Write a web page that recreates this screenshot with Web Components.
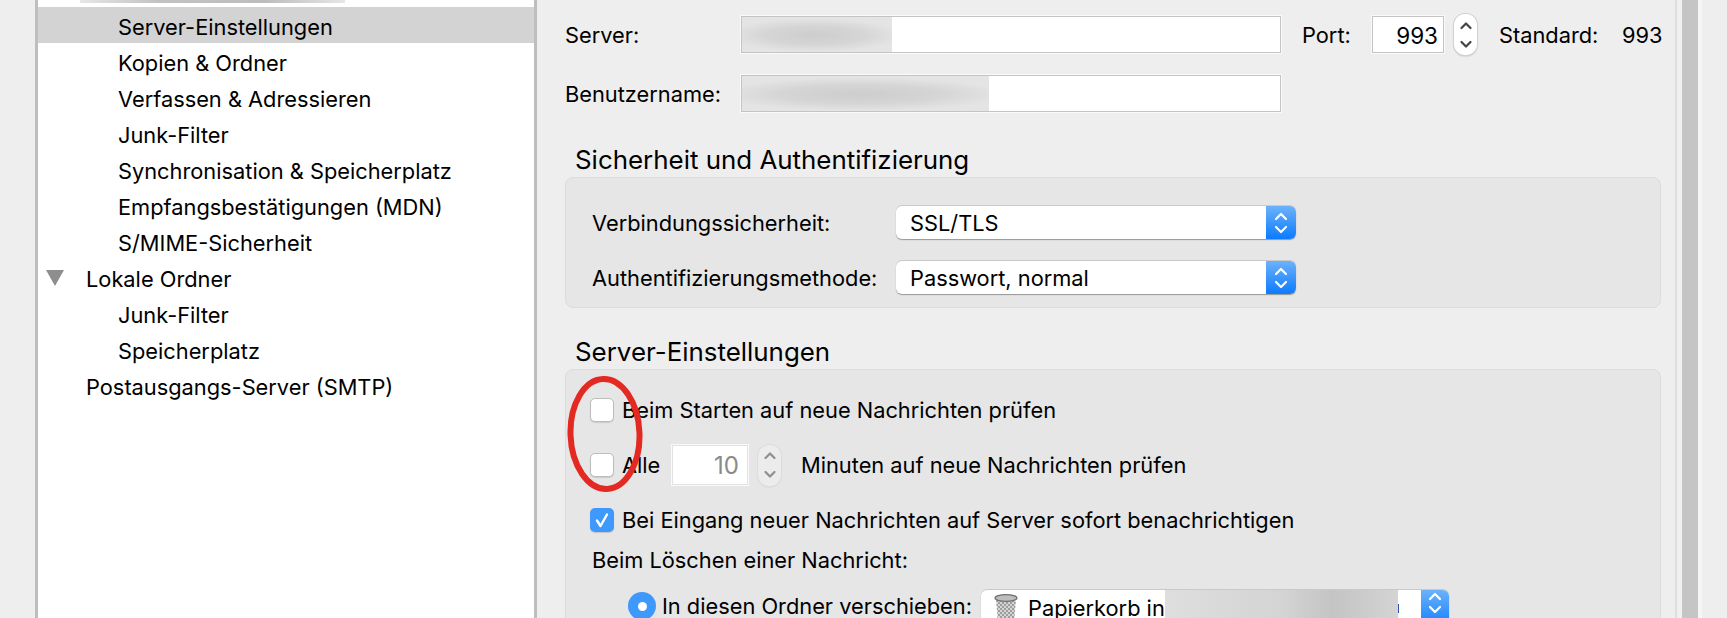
<!DOCTYPE html>
<html lang="de"><head><meta charset="utf-8"><title>Server-Einstellungen</title>
<style>
html,body{margin:0;padding:0;height:618px;overflow:hidden;background:#eee}
body{font:21.8px/24px Inter,"Liberation Sans",Arial,sans-serif;color:#000}
</style></head><body>
<pref-window>
  <account-tree slot="tree">
    <tree-row indent="2" selected>Server-Einstellungen</tree-row>
    <tree-row indent="2">Kopien &amp; Ordner</tree-row>
    <tree-row indent="2">Verfassen &amp; Adressieren</tree-row>
    <tree-row indent="2">Junk-Filter</tree-row>
    <tree-row indent="2">Synchronisation &amp; Speicherplatz</tree-row>
    <tree-row indent="2">Empfangsbestätigungen (MDN)</tree-row>
    <tree-row indent="2">S/MIME-Sicherheit</tree-row>
    <tree-row indent="1" open>Lokale Ordner</tree-row>
    <tree-row indent="2">Junk-Filter</tree-row>
    <tree-row indent="2">Speicherplatz</tree-row>
    <tree-row indent="1">Postausgangs-Server (SMTP)</tree-row>
  </account-tree>
  <settings-form slot="form">
    <form-row style="--top:16px;--h:37px">
      <form-label style="--w:176px">Server:</form-label>
      <text-field style="--w:540px;--h:37px" blur="150"></text-field>
      <form-label style="--w:70px;--ml:21px">Port:</form-label>
      <text-field style="--w:72px;--h:37px" align="right">993</text-field>
      <mac-stepper style="--ml:10px"></mac-stepper>
      <form-label style="--w:123px;--ml:22px">Standard:</form-label>
      <span>993</span>
    </form-row>
    <form-row style="--top:22px;--h:37px">
      <form-label style="--w:176px">Benutzername:</form-label>
      <text-field style="--w:540px;--h:37px" blur="247"></text-field>
    </form-row>
    <group-box heading="Sicherheit und Authentifizierung" style="--title-top:34px;--pad:28px 0 14px 26px;--box-h:131px">
      <form-row style="--h:33px">
        <form-label style="--w:304px">Verbindungssicherheit:</form-label>
        <mac-select style="--w:400px">SSL/TLS</mac-select>
      </form-row>
      <form-row style="--top:22px;--h:33px">
        <form-label style="--w:304px">Authentifizierungsmethode:</form-label>
        <mac-select style="--w:400px">Passwort, normal</mac-select>
      </form-row>
    </group-box>
    <group-box heading="Server-Einstellungen" style="--title-top:30px;--pad:28px 0 0 24px;--box-h:260px">
      <form-row style="--h:23px">
        <mac-check>Beim Starten auf neue Nachrichten prüfen</mac-check>
      </form-row>
      <form-row style="--top:24px;--h:40px">
        <mac-check style="--w:82px">Alle</mac-check>
        <text-field style="--w:76px;--h:40px" align="right" disabled>10</text-field>
        <mac-stepper disabled style="--ml:10px"></mac-stepper>
        <span style="margin-left:20px">Minuten auf neue Nachrichten prüfen</span>
      </form-row>
      <form-row style="--top:23px;--h:23px">
        <mac-check checked>Bei Eingang neuer Nachrichten auf Server sofort benachrichtigen</mac-check>
      </form-row>
      <form-row style="--top:17px;--h:24px;--ml:2px">
        <span>Beim Löschen einer Nachricht:</span>
      </form-row>
      <form-row style="--top:18px;--h:32px;--ml:38px">
        <mac-radio style="--w:353px">In diesen Ordner verschieben:</mac-radio>
        <mac-select style="--w:468px;--ml:0px" folder>Papierkorb in</mac-select>
      </form-row>
    </group-box>
    <red-ellipse></red-ellipse>
  </settings-form>
</pref-window>
<script>
const def=(name,html)=>{
  customElements.define(name,class extends HTMLElement{
    constructor(){super();this.attachShadow({mode:'open'});}
    connectedCallback(){this.shadowRoot.innerHTML=typeof html==='function'?html(this):html;}
  });
};
const chev=(c,w)=>`<svg width="14" height="26" viewBox="0 0 14 26" fill="none" stroke="${c}" stroke-width="${w}" stroke-linecap="round" stroke-linejoin="round"><path d="M2 9 7 4l5 5M2 17l5 5 5-5"/></svg>`;

def('pref-window',`<style>
:host{display:flex;width:1727px;height:618px;overflow:hidden;background:#eee}
.l{flex:0 0 35px}
.t{flex:0 0 502px;height:618px;box-sizing:border-box;border-left:3px solid #bebebe;border-right:3px solid #bebebe;background:#fff;overflow:hidden}
.f{flex:0 0 1138px;height:618px;position:relative}
.sep{flex:0 0 2px;background:#dedede}
.g{flex:0 0 5px;background:#f0f0f0}
.sb{flex:0 0 16px;background:#c5c5c5}
.w{flex:0 0 4px;background:#f6f6f6}
.r{flex:1;background:#eeeeee}
</style><div class="l"></div><div class="t"><slot name="tree"></slot></div><div class="f"><slot name="form"></slot></div><div class="sep"></div><div class="g"></div><div class="sb"></div><div class="w"></div><div class="r"></div>`);

def('account-tree',`<style>
:host{display:block}
.clip{height:7px}
.strip{margin-left:42px;width:265px;height:3px;background:linear-gradient(90deg,#e6e6e6,#c2c2c2 30%,#bdbdbd 70%,#e6e6e6)}
</style><div class="clip"><div class="strip"></div></div><slot></slot>`);

def('tree-row',h=>{
  const pl=h.getAttribute('indent')==='2'?80:48;
  const tri=h.hasAttribute('open')?`<svg class="tri" width="18" height="16" viewBox="0 0 18 16"><path d="M0 0H18L9 16Z" fill="#8e8e8e"/></svg>`:'';
  return `<style>
  :host{display:block;height:36px;${h.hasAttribute('selected')?'background:#d3d3d3;':''}}
  .r{height:36px;box-sizing:border-box;padding:2px 0 0 ${pl}px;line-height:36px;display:block;position:relative;white-space:nowrap}
  .tri{position:absolute;left:8px;top:11px}
  </style><div class="r">${tri}<slot></slot></div>`;
});

def('settings-form',`<style>
:host{display:block;box-sizing:border-box;padding-left:28px;height:618px;overflow:hidden;position:relative}
</style><slot></slot>`);

def('form-row',`<style>
:host{display:flex;align-items:center;height:var(--h);margin-top:var(--top,0);margin-left:var(--ml,0);white-space:nowrap}
</style><slot></slot>`);

def('form-label',`<style>
:host{display:block;width:var(--w);margin-left:var(--ml,0);white-space:nowrap}
</style><slot></slot>`);

def('text-field',h=>{
  const b=h.getAttribute('blur');
  const dis=h.hasAttribute('disabled');
  return `<style>
  :host{display:block;width:var(--w);height:var(--h);margin-left:var(--ml,0);box-sizing:border-box;border:1px solid #c4c4c4;outline:1px solid #fafafa;background:#fff;overflow:hidden;flex:none;${dis?'color:#8a8a8a;border-color:#e2e2e2;':''}}
  .v{display:block;text-align:right;padding-right:${dis?8:5}px;font-size:${dis?24:22.5}px;line-height:${dis?40:38}px}
  .b{height:100%;background:radial-gradient(ellipse 58% 48% at 48% 52%,#cdcdcd 0,#d5d5d5 55%,#e4e4e4 100%)}
  </style>${b?`<div class="b" style="width:${b}px"></div>`:`<span class="v"><slot></slot></span>`}`;
});

def('mac-stepper',h=>{
  const dis=h.hasAttribute('disabled');
  return `<style>
  :host{display:flex;align-items:center;justify-content:center;flex:none;width:23px;height:41px;margin-left:var(--ml,0);border-radius:11px;background:${dis?'#ececec':'#fff'};box-shadow:0 0 0 1px ${dis?'#dcdcdc':'#d2d2d2'},0 1px 2px rgba(0,0,0,${dis?.1:.3})}
  svg{display:block}
  </style><svg width="14" height="32" viewBox="0 0 14 32" fill="none" stroke="${dis?'#8f8f8f':'#444'}" stroke-width="2.2" stroke-linecap="round" stroke-linejoin="round"><path d="M2.5 9 7 4.5 11.5 9M2.5 23 7 27.5l4.5-4.5"/></svg>`;
});

def('group-box',h=>`<style>
:host{display:block;width:1096px}
.t{margin-top:var(--title-top);margin-left:10px;font-size:25.9px;line-height:28px;white-space:nowrap}
.b{height:var(--box-h);box-sizing:border-box;margin-top:3px;padding:var(--pad);background:#e6e6e6;border:1px solid #dcdcdc;border-radius:8px}
</style><div class="t">${h.getAttribute('heading')}</div><div class="b"><slot></slot></div>`);

def('mac-select',h=>{
  const folder=h.hasAttribute('folder');
  const trash=`<svg width="26" height="32" viewBox="0 0 26 32" style="flex:none;margin:3px 9px 0 0"><defs><pattern id="m" width="4" height="4" patternUnits="userSpaceOnUse"><path d="M0 0 4 4M4 0 0 4" stroke="#8f8f8f" stroke-width=".8"/></pattern></defs><path d="M3 5 5 30Q13 33 21 30L23 5Z" fill="#d5d5d5"/><path d="M3 5 5 30Q13 33 21 30L23 5Z" fill="url(#m)"/><ellipse cx="13" cy="5" rx="11" ry="3.4" fill="#bdbdbd" stroke="#6f6f6f" stroke-width="1.2"/></svg>`;
  return `<style>
  :host{display:flex;flex:none;width:var(--w);height:33px;margin-left:var(--ml,0);border-radius:6px;background:#fff;box-shadow:0 -1px 0 #c9c9c9,0 1px 1px rgba(0,0,0,.35);overflow:visible;${folder?'align-self:flex-start;height:40px;':''}}
  .v{flex:1;display:flex;align-items:${folder?'flex-start':'center'};padding-left:${folder?12:14}px;overflow:hidden;min-width:0;${folder?'line-height:36px;':''}}
  .txt{flex:none;${folder?'width:137px;':''}white-space:nowrap}
  .a{flex:none;width:30px;${folder?'width:28px;':''}display:flex;justify-content:center;align-items:${folder?'flex-start':'center'};background:linear-gradient(#6cb2fb,#0b7bff);border-radius:0 6px 6px 0}
  .blur{flex:none;width:233px;height:34px;margin:-2px 0 0 0;background:linear-gradient(90deg,#dedede,#d4d4d4 50%,#c4c4c4 72%,#d4d4d4)}
  .rest{flex:none;width:1px;height:9px;margin:14px 0 0 0;background:#2a5aa8}
  </style><div class="v">${folder?trash:''}<span class="txt"><slot></slot></span>${folder?'<div class="blur"></div><div class="rest"></div>':''}</div><div class="a">${chev('#fff',2.2)}</div>`;
});

def('mac-check',h=>{
  const on=h.hasAttribute('checked');
  return `<style>
  :host{display:flex;align-items:center;white-space:nowrap;flex:none;width:var(--w,auto)}
  .c{flex:none;width:24px;height:24px;box-sizing:border-box;margin-right:8px;border-radius:5px;display:flex;align-items:center;justify-content:center;${on?'background:#3f98fb;box-shadow:0 1px 1px rgba(0,0,0,.15)':'background:#fff;border:1px solid #bdbdbd;box-shadow:0 1px 1px rgba(0,0,0,.12)'}}
  </style><span class="c">${on?'<svg width="16" height="16" viewBox="0 0 16 16" fill="none" stroke="#fff" stroke-width="2.4" stroke-linecap="round" stroke-linejoin="round"><path d="M3 8.5 6.5 14 13 2.5"/></svg>':''}</span><slot></slot>`;
});

def('mac-radio',`<style>
:host{display:flex;align-items:center;white-space:nowrap;flex:none;width:var(--w,auto)}
.o{flex:none;width:28px;height:28px;margin-right:6px;border-radius:50%;background:#3f98fb;display:flex;align-items:center;justify-content:center}
.o i{display:block;width:9px;height:9px;border-radius:50%;background:#fff}
</style><span class="o"><i></i></span><slot></slot>`);

def('red-ellipse',`<style>
:host{position:absolute;left:30px;top:376px;width:76px;height:116px;pointer-events:none}
svg{display:block}
</style><svg width="76" height="116" viewBox="0 0 76 116"><ellipse cx="38" cy="58" rx="34.5" ry="55" transform="rotate(-2 38 58)" fill="none" stroke="#e32a22" stroke-width="6"/></svg>`);
</script>
</body></html>
